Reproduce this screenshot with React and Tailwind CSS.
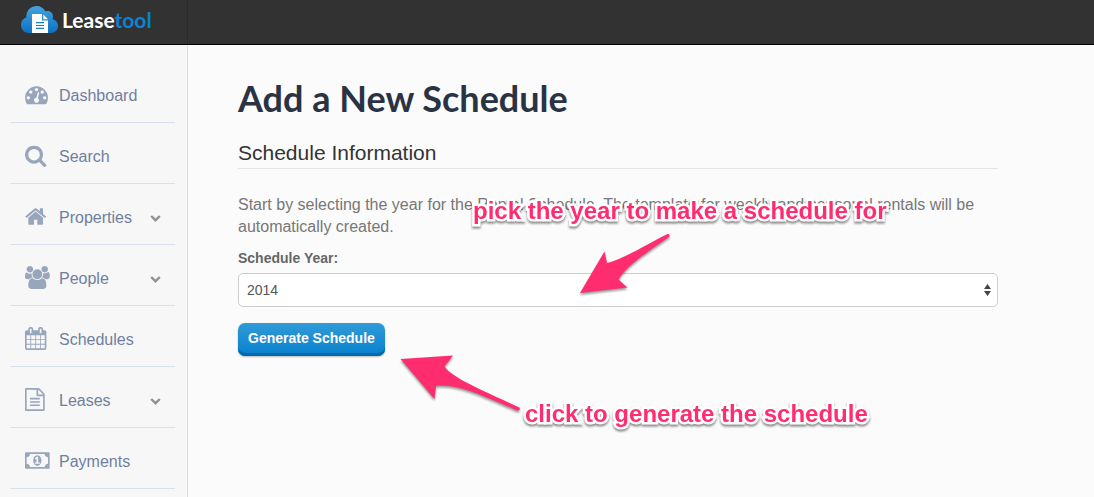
import { useState } from "react";

const navItems = [
  {
    label: "Dashboard",
    viewBox: "0 0 1948 1792",
    path: "M384 1152q0-53-37.5-90.5t-90.5-37.5-90.5 37.5-37.5 90.5 37.5 90.5 90.5 37.5 90.5-37.5 37.5-90.5zm192-448q0-53-37.5-90.5t-90.5-37.5-90.5 37.5-37.5 90.5 37.5 90.5 90.5 37.5 90.5-37.5 37.5-90.5zm428 481l101-382q6-26-7.5-48.5t-38.5-29.5-48 6.5-30 39.5l-101 382q-60 5-107 43.5t-63 98.5q-20 77 20 146t117 89 146-20 89-117q16-60-6-117t-72-91zm660-33q0-53-37.5-90.5t-90.5-37.5-90.5 37.5-37.5 90.5 37.5 90.5 90.5 37.5 90.5-37.5 37.5-90.5zm-640-640q0-53-37.5-90.5t-90.5-37.5-90.5 37.5-37.5 90.5 37.5 90.5 90.5 37.5 90.5-37.5 37.5-90.5zm448 192q0-53-37.5-90.5t-90.5-37.5-90.5 37.5-37.5 90.5 37.5 90.5 90.5 37.5 90.5-37.5 37.5-90.5zm320 448q0 261-141 483-19 29-54 29h-1402q-35 0-54-29-141-221-141-483 0-182 71-348t191-286 286-191 348-71 348 71 286 191 191 286 71 348z",
  },
  {
    label: "Search",
    viewBox: "64 0 1948 1792",
    path: "M1216 832q0-185-131.5-316.5t-316.5-131.5-316.5 131.5-131.5 316.5 131.5 316.5 316.5 131.5 316.5-131.5 131.5-316.5zm512 832q0 52-38 90t-90 38q-54 0-90-38l-343-342q-179 124-399 124-143 0-273.5-55.5t-225-150-150-225-55.5-273.5 55.5-273.5 150-225 225-150 273.5-55.5 273.5 55.5 225 150 150 225 55.5 273.5q0 220-124 399l343 343q37 37 37 90z",
  },
  {
    label: "Properties",
    more: true,
    viewBox: "64 0 1948 1792",
    path: "M1472 992v480q0 26-19 45t-45 19h-384v-384h-256v384h-384q-26 0-45-19t-19-45v-480q0-1 .5-3t.5-3l575-474 575 474q1 2 1 6zm223-69l-62 74q-8 9-21 11h-3q-13 0-21-7l-692-577-692 577q-12 8-24 7-13-2-21-11l-62-74q-8-10-7-23.5t11-21.5l719-599q32-26 76-26t76 26l244 204v-195q0-14 9-23t23-9h192q14 0 23 9t9 23v408l219 182q10 8 11 21.5t-7 23.5z",
  },
  {
    label: "People",
    more: true,
    viewBox: "64 0 1948 1792",
    path: "M657 896q-162 5-265 128h-134q-82 0-138-40.5t-56-118.5q0-353 124-353 6 0 43.5 21t97.5 42.5 119 21.5q67 0 133-23-5 37-5 66 0 159 93 293zm1071 637q0 120-73 189.5t-194 69.5h-874q-121 0-194-69.5t-73-189.5q0-53 3.5-103.5t14-109 26.5-108.5 43-97.5 62-81 85.5-53.5 111.5-20q10 0 43 21.5t73 48 107 48 135 21.5 135-21.5 107-48 73-48 43-21.5q61 0 111.5 20t85.5 53.5 62 81 43 97.5 26.5 108.5 14 109 3.5 103.5zm-1024-1277q0 106-75 181t-181 75-181-75-75-181 75-181 181-75 181 75 75 181zm704 384q0 159-112.5 271.5t-271.5 112.5-271.5-112.5-112.5-271.5 112.5-271.5 271.5-112.5 271.5 112.5 112.5 271.5zm576 225q0 78-56 118.5t-138 40.5h-134q-103-123-265-128 93-134 93-293 0-29-5-66 66 23 133 23 59 0 119-21.5t97.5-42.5 43.5-21q124 0 124 353zm-128-609q0 106-75 181t-181 75-181-75-75-181 75-181 181-75 181 75 75 181z",
  },
  {
    label: "Schedules",
    viewBox: "64 0 1948 1792",
    path: "M192 1664h288v-288h-288v288zm352 0h320v-288h-320v288zm-352-352h288v-320h-288v320zm352 0h320v-320h-320v320zm-352-384h288v-288h-288v288zm736 736h320v-288h-320v288zm-384-736h320v-288h-320v288zm768 736h288v-288h-288v288zm-384-352h320v-320h-320v320zm-352-864v-288q0-13-9.5-22.5t-22.5-9.5h-64q-13 0-22.5 9.5t-9.5 22.5v288q0 13 9.5 22.5t22.5 9.5h64q13 0 22.5-9.5t9.5-22.5zm736 864h288v-320h-288v320zm-384-384h320v-288h-320v288zm384 0h288v-288h-288v288zm32-480v-288q0-13-9.5-22.5t-22.5-9.5h-64q-13 0-22.5 9.5t-9.5 22.5v288q0 13 9.5 22.5t22.5 9.5h64q13 0 22.5-9.5t9.5-22.5zm384-64v1280q0 52-38 90t-90 38h-1408q-52 0-90-38t-38-90v-1280q0-52 38-90t90-38h128v-96q0-66 47-113t113-47h64q66 0 113 47t47 113v96h384v-96q0-66 47-113t113-47h64q66 0 113 47t47 113v96h128q52 0 90 38t38 90z",
  },
  {
    label: "Leases",
    more: true,
    viewBox: "128 0 1948 1792",
    path: "M1596 380q28 28 48 76t20 88v1152q0 40-28 68t-68 28h-1344q-40 0-68-28t-28-68v-1600q0-40 28-68t68-28h896q40 0 88 20t76 48zm-444-244v376h376q-10-29-22-41l-313-313q-12-12-41-22zm384 1528v-1024h-416q-40 0-68-28t-28-68v-416h-768v1536h1280zm-1024-864q0-14 9-23t23-9h704q14 0 23 9t9 23v64q0 14-9 23t-23 9h-704q-14 0-23-9t-9-23v-64zm736 224q14 0 23 9t9 23v64q0 14-9 23t-23 9h-704q-14 0-23-9t-9-23v-64q0-14 9-23t23-9h704zm0 256q14 0 23 9t9 23v64q0 14-9 23t-23 9h-704q-14 0-23-9t-9-23v-64q0-14 9-23t23-9h704z",
  },
  {
    label: "Payments",
    viewBox: "64 0 1948 1792",
    path: "M832 1152h384v-96h-128v-448h-114l-148 137 77 80q42-37 55-57h2v288h-128v96zm512-256q0 70-21 142t-59.5 134-101.5 101-138 39-138-39-101.5-101-59.5-134-21-142 21-142 59.5-134 101.5-101 138-39 138 39 101.5 101 59.5 134 21 142zm512 256v-512q-106 0-181-75t-75-181h-1152q0 106-75 181t-181 75v512q106 0 181 75t75 181h1152q0-106 75-181t181-75zm128-832v1152q0 26-19 45t-45 19h-1792q-26 0-45-19t-19-45v-1152q0-26 19-45t45-19h1792q26 0 45 19t19 45z",
  },
];

function Logo() {
  return (
    <a href="#" className="flex items-center gap-1 font-[Lato,sans-serif] text-[21px] leading-6 font-bold text-white">
      <svg className="h-7 w-[37px]" viewBox="0 0 37 28" aria-hidden="true">
        <defs>
          <linearGradient id="cloud" x1="0" y1="0" x2="0" y2="1">
            <stop offset="0" stopColor="#45a3dc" />
            <stop offset="1" stopColor="#0a72c4" />
          </linearGradient>
        </defs>
        <path
          fill="url(#cloud)"
          d="M8 27C3.500 27 0 23.500 0 19C0 15.500 2 12.500 5.300 11.500C5 5 9.500 0 15.500 0C19.500 0 22.500 2 24.300 5.300C28.500 3.800 32.300 6.500 32 11C31.900 11.900 31.700 12.600 31.300 13.300C34.700 13.800 37 16.500 37 20C37 24 34 27 30 27Z"
        />
        <path fill="#fff" d="M11 8H21V14.500H27V27H11Z" />
        <path fill="#fff" d="M22.300 8.500L27 13.200H22.300Z" />
        <path stroke="#1a7fca" strokeWidth="1.200" d="M15 16.700H23M15 19.500H23M15 22.300H23" />
      </svg>
      <span>
        Lease<span className="text-[#0a84d0]">tool</span>
      </span>
    </a>
  );
}

function NavItem({ item }) {
  return (
    <li className="border-b border-[#d8dfea]">
      <a href="#" className="flex h-[60px] items-center pt-2 pr-[14px] pl-[15px] text-base text-[#6f7f9f]">
        <svg className="mr-[9px] mb-1 h-[23px] w-[25px] fill-[#98a6bc]" viewBox={item.viewBox} aria-hidden="true">
          <path d={item.path} />
        </svg>
        {item.label}
        {item.more && (
          <svg className="ml-auto h-[7px] w-[11px]" viewBox="0 0 11 7" fill="none" stroke="#929292" strokeWidth="2.400" aria-hidden="true">
            <path d="M1.200 1L5.500 5.200L9.800 1" />
          </svg>
        )}
      </a>
    </li>
  );
}

const noteClass =
  "absolute whitespace-nowrap text-2xl leading-7 font-bold text-[#ff2d6f] [paint-order:stroke_fill] [-webkit-text-stroke:5px_white] drop-shadow-[0_2px_1px_rgba(0,0,0,0.45)]";

// Hand-drawn hints that float over the form
function Annotations() {
  return (
    <div className="pointer-events-none absolute inset-0">
      <p className={`${noteClass} top-[152px] left-[285px]`}>pick the year to make a schedule for</p>
      <svg
        className="absolute top-[188px] left-[391px] h-[62px] w-[94px] fill-[#ff2d6f] drop-shadow-[0_2px_1px_rgba(0,0,0,0.4)]"
        viewBox="0 0 94 62"
        aria-hidden="true"
      >
        <path d="M1 60L25.500 18.500L28 30C45 26 66 12 88 1.200Q91 0 90.500 3.500C70 18 48 32 39.500 46.500L48.500 54.500Z" />
      </svg>
      <svg
        className="absolute top-[309px] left-[212px] h-[60px] w-[122px] fill-[#ff2d6f] drop-shadow-[0_2px_1px_rgba(0,0,0,0.4)]"
        viewBox="0 0 122 60"
        aria-hidden="true"
      >
        <path d="M.5 5L53 1.500L44.500 12.500C52 24 86 38 119.500 53.500Q121 57 117 56.500C86 43 56 29 36 32L34.500 45Z" />
      </svg>
      <p className={`${noteClass} top-[355px] left-[337px]`}>click to generate the schedule</p>
    </div>
  );
}

export default function App() {
  const [year, setYear] = useState("2014");

  return (
    <div className="flex h-screen flex-col overflow-hidden bg-[#fbfbfb] font-['Liberation_Sans',Arial,sans-serif]">
      <header className="flex h-[45px] shrink-0 border-b border-black bg-[#323232]">
        <div className="flex w-[188px] items-start border-r border-[#2a2a2a] pt-[6px] pl-[21px]">
          <Logo />
        </div>
      </header>

      <div className="flex min-h-0 flex-1">
        <aside className="w-[188px] shrink-0 border-r border-[#d8dfea] bg-[#f7f7f7] pt-[17px] pr-3 pl-[10px]">
          <nav>
            <ul>
              {navItems.map((item) => (
                <NavItem key={item.label} item={item} />
              ))}
            </ul>
          </nav>
        </aside>

        <main className="relative flex-1 pt-[31px] pr-24 pl-[50px]">
          <h1 className="font-[Lato,sans-serif] text-4xl leading-[44px] font-bold text-[#2a3344]">Add a New Schedule</h1>
          <h2 className="mt-[17px] border-b border-[#e5e5e5] text-[21px] leading-[31px] text-[#333]">
            Schedule Information
          </h2>
          <p className="mt-[25px] text-base leading-[22px] text-[#777]">
            Start by selecting the year for the Rental Schedule. The template for weekly and seasonal rentals will be
            automatically created.
          </p>
          <form onSubmit={(e) => e.preventDefault()}>
            <label htmlFor="year" className="mt-[10px] block text-sm leading-5 font-bold text-[#666]">
              Schedule Year:
            </label>
            <div className="relative mt-[5px]">
              <select
                id="year"
                value={year}
                onChange={(e) => setYear(e.target.value)}
                className="block h-[34px] w-full appearance-none rounded-[5px] border border-[#ccc] bg-white px-2 text-sm text-[#555]"
              >
                <option>2014</option>
                <option>2015</option>
              </select>
              <svg className="pointer-events-none absolute top-[11px] right-[7px] h-3 w-[7px] fill-[#444]" viewBox="0 0 7 12" aria-hidden="true">
                <path d="M0 5L3.500 0L7 5ZM0 7H7L3.500 12Z" />
              </svg>
            </div>
            <button
              type="submit"
              className="mt-4 h-[33px] rounded-[7px] bg-linear-to-b from-[#2f9bd8] to-[#0080ce] px-[10px] pb-[3px] text-sm font-bold text-white shadow-[inset_0_-3px_0_#0069aa,0_1px_2px_rgba(0,0,0,0.25)]"
            >
              Generate Schedule
            </button>
          </form>
          <Annotations />
        </main>
      </div>
    </div>
  );
}
